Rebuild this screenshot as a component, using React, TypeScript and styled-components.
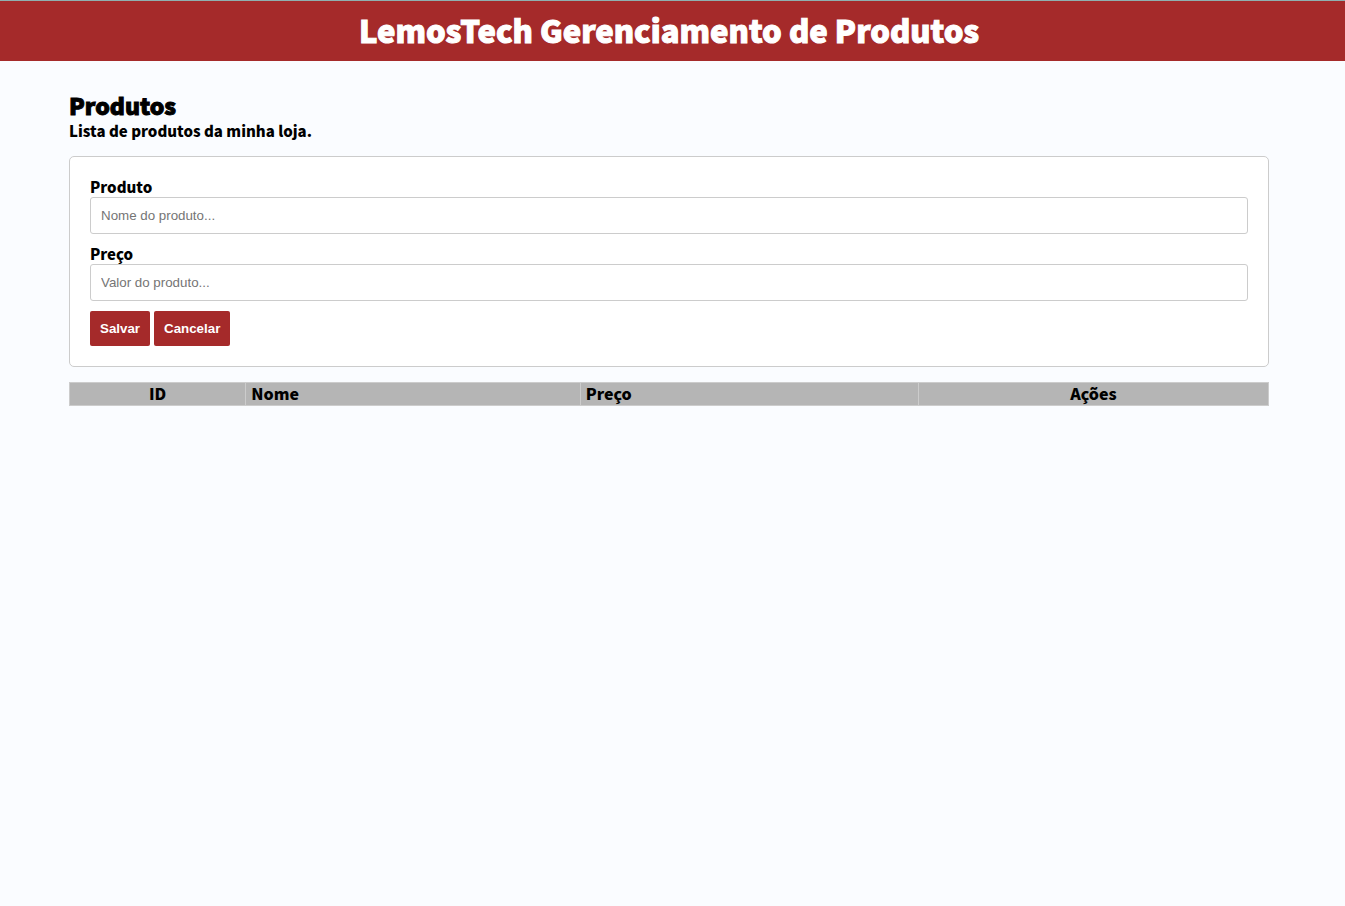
import React, { useState } from "react";
import styled, { createGlobalStyle } from "styled-components";

const GlobalStyle = createGlobalStyle`
  * {
    margin: 0;
    padding: 0;
    box-sizing: border-box;
  }

  body {
    background: #fafcff;
    color: #000;
    font-family: "Noto Sans CJK JP", "Noto Sans", sans-serif;
    font-size: 15px;
    font-weight: 900;
    line-height: 20px;
  }
`;

const Header = styled.header`
  display: flex;
  align-items: center;
  justify-content: center;
  height: 61px;
  padding: 0 7px 2px 0;
  border-top: 1px solid #8fb0b0;
  background: #a52a2a;
  color: #fff;
`;

const Brand = styled.h1`
  font-size: 31px;
  font-weight: 900;
  line-height: 40px;
  -webkit-text-stroke: 1px currentColor;
`;

const Page = styled.div`
  padding: 30px 7px 0 0;
`;

const Content = styled.main`
  width: calc(100% - 40px);
  max-width: 1200px;
  margin: 0 auto;
`;

const Title = styled.h2`
  margin-bottom: 2px;
  font-size: 23px;
  font-weight: 900;
  line-height: 28px;
  -webkit-text-stroke: 1px currentColor;
`;

const Subtitle = styled.p`
  line-height: 20px;
`;

const Card = styled.form`
  margin: 15px 0;
  padding: 20px;
  border: 1px solid #ccc;
  border-radius: 5px;
  background: #fff;
`;

const Label = styled.label`
  display: block;
`;

const Input = styled.input`
  display: block;
  width: 100%;
  height: 37px;
  margin-bottom: 10px;
  padding: 10px;
  border: 1px solid #ccc;
  border-radius: 3px;
  font-family: "Liberation Sans", Arial, sans-serif;

  &::placeholder {
    color: #757575;
  }
`;

const Actions = styled.div`
  display: flex;
  gap: 4px;
`;

const Button = styled.button`
  height: 35px;
  padding: 10px;
  border: 0;
  border-radius: 2px;
  background: #a52a2a;
  color: #fff;
  font-family: "Liberation Sans", Arial, sans-serif;
  font-weight: 700;
  line-height: 15px;
  cursor: pointer;
`;

const Table = styled.table`
  width: 100%;
  border-collapse: collapse;
  table-layout: fixed;
`;

const HeadCell = styled.th<{ $width: string; $align?: string }>`
  width: ${(p) => p.$width};
  height: 23px;
  padding: 0 5px 2px;
  border: 1px solid #ccc;
  background: #b5b5b5;
  font-size: 16px;
  font-weight: 900;
  text-align: ${(p) => p.$align ?? "left"};
`;

export default function App() {
  const [name, setName] = useState("");
  const [price, setPrice] = useState("");

  const clear = () => {
    setName("");
    setPrice("");
  };

  return (
    <>
      <GlobalStyle />
      <Header>
        <Brand>LemosTech Gerenciamento de Produtos</Brand>
      </Header>
      <Page>
        <Content>
          <Title>Produtos</Title>
          <Subtitle>Lista de produtos da minha loja.</Subtitle>
          <Card onSubmit={(e) => e.preventDefault()}>
            <Label htmlFor="produto">Produto</Label>
            <Input
              id="produto"
              type="text"
              placeholder="Nome do produto..."
              value={name}
              onChange={(e) => setName(e.target.value)}
            />
            <Label htmlFor="preco">Preço</Label>
            <Input
              id="preco"
              type="text"
              placeholder="Valor do produto..."
              value={price}
              onChange={(e) => setPrice(e.target.value)}
            />
            <Actions>
              <Button type="submit">Salvar</Button>
              <Button type="button" onClick={clear}>
                Cancelar
              </Button>
            </Actions>
          </Card>
          <Table>
            <thead>
              <tr>
                <HeadCell $width="14.7%" $align="center">ID</HeadCell>
                <HeadCell $width="27.9%">Nome</HeadCell>
                <HeadCell $width="28.2%">Preço</HeadCell>
                <HeadCell $width="29.2%" $align="center">Ações</HeadCell>
              </tr>
            </thead>
            <tbody />
          </Table>
        </Content>
      </Page>
    </>
  );
}
